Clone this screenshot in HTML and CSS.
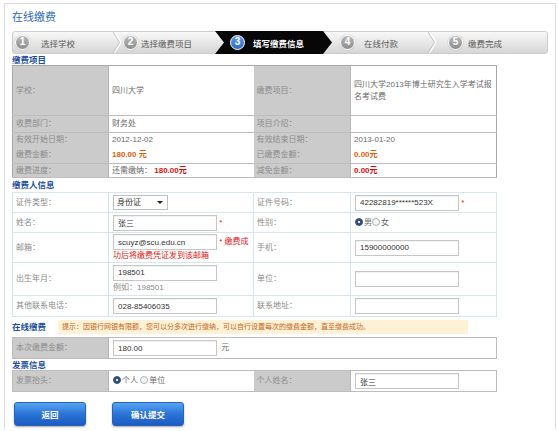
FILE: index.html
```html
<!DOCTYPE html>
<html lang="zh-CN">
<head>
<meta charset="utf-8">
<title>在线缴费</title>
<link rel="stylesheet" href="styles.css">
</head>
<body>
<div class="frame">
  <h1 class="title">在线缴费</h1>

  <div class="steps">
    <div class="step step-1"><span class="num">1</span><span class="stxt">选择学校</span></div>
    <svg class="chev" width="8" height="21" viewBox="0 0 8 21"><polyline points="0,0 6.5,10.5 0,21" fill="none" stroke="#c3c3c3" stroke-width="1"/><polyline points="1.5,0 8,10.5 1.5,21" fill="none" stroke="#ffffff" stroke-width="1.2"/></svg>
    <div class="step step-2"><span class="num">2</span><span class="stxt">选择缴费项目</span></div>
    <div class="step step-3 active"><span class="num">3</span><span class="stxt">填写缴费信息</span></div>
    <div class="step step-4"><span class="num">4</span><span class="stxt">在线付款</span></div>
    <svg class="chev" width="8" height="21" viewBox="0 0 8 21"><polyline points="0,0 6.5,10.5 0,21" fill="none" stroke="#c3c3c3" stroke-width="1"/><polyline points="1.5,0 8,10.5 1.5,21" fill="none" stroke="#ffffff" stroke-width="1.2"/></svg>
    <div class="step step-5"><span class="num">5</span><span class="stxt">缴费完成</span></div>
  </div>

  <div class="sec sec-1">缴费项目</div>
  <table class="grid info">
    <colgroup><col class="c1"><col class="c2"><col class="c3"><col class="c4"></colgroup>
    <tr class="r-tall">
      <td class="lab">学校：</td><td class="val">四川大学</td>
      <td class="lab">缴费项目：</td><td class="val">四川大学2013年博士研究生入学考试报名考试费</td>
    </tr>
    <tr class="r-a">
      <td class="lab">收费部门：</td><td class="val">财务处</td>
      <td class="lab">项目介绍：</td><td class="val"></td>
    </tr>
    <tr class="r-b nobot">
      <td class="lab">有效开始日期：</td><td class="val">2012-12-02</td>
      <td class="lab">有效结束日期：</td><td class="val">2013-01-20</td>
    </tr>
    <tr class="r-c">
      <td class="lab">缴费金额：</td><td class="val"><b class="orange">180.00 元</b></td>
      <td class="lab">已缴费金额：</td><td class="val"><b class="orange">0.00元</b></td>
    </tr>
    <tr class="r-d">
      <td class="lab">缴费进度：</td><td class="val">还需缴纳： <b class="red">180.00元</b></td>
      <td class="lab">减免金额：</td><td class="val"><b class="red">0.00元</b></td>
    </tr>
  </table>

  <div class="sec sec-2">缴费人信息</div>
  <table class="grid person">
    <colgroup><col class="c1"><col class="c2"><col class="c3"><col class="c4"></colgroup>
    <tr class="p1">
      <td class="plab">证件类型：</td>
      <td class="pval"><span class="select"><span>身份证</span><span class="caret"></span></span></td>
      <td class="plab">证件号码：</td>
      <td class="pval"><input class="inp" type="text" value="42282819******523X"> <span class="req">*</span></td>
    </tr>
    <tr class="p2">
      <td class="plab">姓名：</td>
      <td class="pval"><input class="inp" type="text" value="张三"> <span class="req">*</span></td>
      <td class="plab">性别：</td>
      <td class="pval"><span class="radio on"></span>男<span class="radio"></span>女</td>
    </tr>
    <tr class="p3">
      <td class="plab">邮箱：</td>
      <td class="pval mail"><input class="inp" type="text" value="scuyz@scu.edu.cn"> <span class="req">* 缴费成功后将缴费凭证发到该邮箱</span></td>
      <td class="plab">手机：</td>
      <td class="pval"><input class="inp" type="text" value="15900000000"></td>
    </tr>
    <tr class="p4">
      <td class="plab">出生年月：</td>
      <td class="pval"><input class="inp blk" type="text" value="198501"><div class="hint">例如：198501</div></td>
      <td class="plab">单位：</td>
      <td class="pval"><input class="inp" type="text" value=""></td>
    </tr>
    <tr class="p5">
      <td class="plab">其他联系电话：</td>
      <td class="pval"><input class="inp" type="text" value="028-85406035"></td>
      <td class="plab">联系地址：</td>
      <td class="pval"><input class="inp" type="text" value=""></td>
    </tr>
  </table>

  <div class="tiprow">
    <div class="sec sec-inline">在线缴费</div>
    <div class="tip">提示：因银行网银有限额，您可以分多次进行缴纳，可以自行设置每次的缴费金额，直至缴费成功。</div>
  </div>

  <table class="grid pay">
    <colgroup><col class="c1"><col class="c2"><col class="c3"><col class="c4"></colgroup>
    <tr>
      <td class="lab">本次缴费金额：</td>
      <td class="pval" colspan="3"><input class="inp" type="text" value="180.00"> <span class="unit">元</span></td>
    </tr>
  </table>

  <div class="sec sec-3">发票信息</div>
  <table class="grid invoice">
    <colgroup><col class="c1"><col class="c2"><col class="c3"><col class="c4"></colgroup>
    <tr>
      <td class="lab">发票抬头：</td>
      <td class="pval"><span class="radio on"></span>个人 <span class="radio"></span>单位</td>
      <td class="lab">个人姓名：</td>
      <td class="pval"><input class="inp" type="text" value="张三"></td>
    </tr>
  </table>

  <div class="actions">
    <button class="btn" type="button">返回</button>
    <button class="btn" type="button">确认提交</button>
  </div>
</div>
</body>
</html>
```

FILE: styles.css
```css
* { box-sizing: border-box; }

body {
  margin: 0;
  background: #ffffff;
  font-family: "Liberation Sans", "Noto Sans CJK SC", sans-serif;
  font-size: 8px;
  color: #666666;
}

.frame {
  margin: 3px 0 0 4px;
  width: 552px;
  height: 426px;
  border: 1px solid #dddddd;
  border-bottom: none;
  padding: 6px 6px 0 7px;
}

.title {
  margin: 0;
  font-size: 11px;
  line-height: 14px;
  font-weight: normal;
  color: #2f6bb5;
}

/* steps */
.steps {
  margin-top: 7px;
  width: 536px;
  height: 23px;
  display: flex;
  align-items: center;
  background: linear-gradient(#f8f8f8, #e6e6e6 55%, #d6d6d6);
  border: 1px solid #cccccc;
  border-radius: 3px;
}
.step {
  display: flex;
  align-items: center;
  height: 21px;
  font-size: 8.5px;
  color: #5a5a5a;
}
.num {
  width: 15px;
  height: 15px;
  border-radius: 50%;
  background: linear-gradient(#b8b8b8, #8e8e8e);
  border: 1.5px solid #ffffff;
  box-shadow: 0 0 1px rgba(0,0,0,.45);
  color: #ffffff;
  font-weight: bold;
  font-size: 10px;
  line-height: 12px;
  text-align: center;
  flex: none;
}
.chev { flex: none; display: block; }
.step-1 { width: 100px; padding-left: 2px; }
.step-1 .stxt { margin-left: 11px; }
.step-2 { width: 94px; padding-left: 2px; }
.step-2 .stxt { margin-left: 3px; }
.step-3 { width: 117px; padding-left: 15px; }
.step-3 .stxt { margin-left: 8px; }
.step-4 { width: 96px; padding-left: 8px; }
.step-4 .stxt { margin-left: 9px; }
.step-5 { flex: 1; padding-left: 12px; }
.step-5 .stxt { margin-left: 5px; }
.active {
  align-self: stretch;
  height: auto;
  margin: -1px 0;
  background: #070707;
  color: #ffffff;
  font-weight: bold;
  clip-path: polygon(0 0, calc(100% - 9px) 0, 100% 50%, calc(100% - 9px) 100%, 0 100%, 9px 50%);
}
.active .num {
  background: linear-gradient(#5b9ae6, #2f6cc4);
}

/* section headings */
.sec {
  font-size: 8.5px;
  line-height: 10px;
  height: 10px;
  font-weight: bold;
  color: #1d4f9c;
}
.sec-1 { margin-top: 1px; }
.sec-2 { margin-top: 2px; }
.sec-3 { margin-top: 1px; }

/* tables */
.grid {
  width: 484px;
  border-collapse: collapse;
  table-layout: fixed;
}
.c1 { width: 96px; }
.c2 { width: 145px; }
.c3 { width: 97px; }
.c4 { width: 146px; }

.grid td {
  padding: 0 3px 0 3px;
  vertical-align: middle;
  line-height: 12px;
}

.info { border: 1px solid #a8a8a8; }
.info td { border-bottom: 1px solid #bdbdbd; }
.info .nobot td { border-bottom: none; }
.lab {
  background: #cbcbcb;
  color: #8c8c8c;
  border-right: 1px solid #b5b5b5;
}
.val { background: #ffffff; color: #6a6a6a; padding-left: 2px; }
.info .r-tall td { height: 50px; }
.info .r-a td { height: 17px; }
.info .r-b td { height: 15px; }
.info .r-c td { height: 16px; }
.info .r-d td { height: 14px; }

.orange { color: #e0600a; }
.red { color: #d80d0d; }

.person { margin-top: 2px; border: 1px solid #d3e2e9; }
.person td { border: 1px solid #d8e5eb; }
.plab { color: #8a8a8a; }
.pval { color: #6a6a6a; padding-left: 4px !important; }
.person .p1 td { height: 20px; }
.person .p2 td { height: 20px; }
.person .p3 td { height: 30px; }
.person .p4 td { height: 33px; }
.person .p5 td { height: 21px; }

.inp {
  width: 104px;
  height: 16px;
  border: 1px solid #c6c6c6;
  box-shadow: inset 0 1px 1px rgba(0,0,0,.06);
  padding: 0 4px;
  margin: 0;
  font-family: "Liberation Sans", "Noto Sans CJK SC", sans-serif;
  font-size: 8px;
  color: #333333;
  vertical-align: middle;
  background: #ffffff;
}
.inp.blk { display: block; }
.hint { color: #8a8a8a; line-height: 12px; margin-top: 1px; }

.req { color: #e02020; }
.mail { line-height: 11px !important; word-break: break-all; }

.select {
  display: inline-flex;
  align-items: center;
  justify-content: space-between;
  width: 55px;
  height: 15px;
  border: 1px solid #c0c0c0;
  padding: 0 4px 0 3px;
  color: #333333;
  vertical-align: middle;
  background: #ffffff;
}
.caret {
  width: 0;
  height: 0;
  border-left: 3px solid transparent;
  border-right: 3px solid transparent;
  border-top: 3px solid #222222;
}

.radio {
  display: inline-block;
  width: 8px;
  height: 8px;
  border-radius: 50%;
  border: 1px solid #a9b3bd;
  background: #f4f4f4;
  vertical-align: -1px;
  margin-right: 1px;
}
.radio.on {
  border-color: #40597a;
  background: radial-gradient(circle, #d7e3f0 0 28%, #2e4a72 38%);
}

/* tip row */
.tiprow {
  margin-top: 2px;
  height: 16px;
  display: flex;
  align-items: center;
}
.sec-inline { width: 46px; height: 10px; }
.tip {
  width: 410px;
  height: 14px;
  background: #fdf2d6;
  color: #c8641c;
  font-size: 7px;
  line-height: 14px;
  padding-left: 4px;
}

.pay { margin-top: 2px; border: 1px solid #bdbdbd; }
.pay td { height: 21px; }
.unit { margin-left: 2px; }

.invoice { border: 1px solid #bdbdbd; }
.invoice td { height: 21px; }

/* buttons */
.actions {
  margin-top: 10px;
  padding-left: 2px;
  display: flex;
  gap: 26px;
}
.btn {
  width: 72px;
  height: 24px;
  border: 1px solid #2563bd;
  border-radius: 3px;
  background: linear-gradient(#56a4f2, #2b74d6 50%, #1b5cc4);
  box-shadow: 0 1px 2px rgba(0,0,0,.35);
  color: #ffffff;
  font-family: "Liberation Sans", "Noto Sans CJK SC", sans-serif;
  font-size: 8.5px;
  font-weight: bold;
  padding: 0;
}
```
